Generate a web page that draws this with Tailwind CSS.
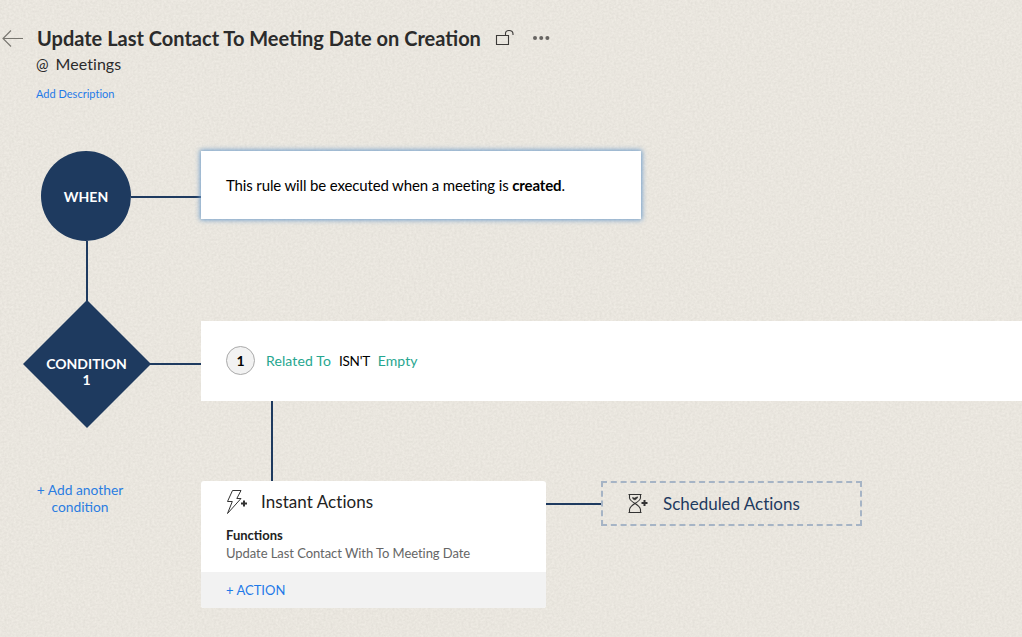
<!DOCTYPE html>
<html lang="en">
<head>
<meta charset="utf-8">
<title>Update Last Contact To Meeting Date on Creation</title>
<script src="https://cdn.jsdelivr.net/npm/@tailwindcss/browser@4"></script>
</head>
<body class="relative isolate h-[637px] w-[1022px] overflow-hidden bg-[#e9e5dd] font-['Lato',sans-serif] text-black">
  <!-- woven paper texture -->
  <svg class="absolute inset-0 -z-10 h-full w-full" aria-hidden="true">
    <filter id="paper" x="0" y="0" width="100%" height="100%" color-interpolation-filters="sRGB">
      <feTurbulence type="fractalNoise" baseFrequency="0.42 0.46" numOctaves="2" seed="4"/>
      <feColorMatrix values="0.07 0 0 0 0.880  0.07 0 0 0 0.866  0.07 0 0 0 0.837  0 0 0 0 1"/>
    </filter>
    <rect width="100%" height="100%" filter="url(#paper)"/>
  </svg>

  <header class="flex h-[151px] items-start">
    <svg class="mt-[29px] ml-[2px] h-[19px] w-[22px] shrink-0" viewBox="0 0 22 19" fill="none" stroke="#77756f" stroke-width="1.1"><path d="M9 1.500L1 9.500l8 8M1 9.500h20"/></svg>
    <div class="ml-[12px] flex flex-col items-start whitespace-nowrap">
      <div class="mt-[23px] flex h-[30px] items-center">
        <h1 class="ml-px w-[444px] text-[20px] leading-[30px] font-bold text-[#2b2b2b]">Update Last Contact To Meeting Date on Creation</h1>
        <svg class="ml-[14px] h-[18px] w-[20px]" viewBox="0 0 20 18" fill="none" stroke="#3c3a38" stroke-width="1.1"><path d="M1.500 6.500h12v9h-12zM10.500 6.500V4.500Q10.500 1.500 14 1.500Q18 1.500 18 5v1"/></svg>
        <svg class="ml-[18px] h-[4px] w-[17px]" viewBox="0 0 17 4" fill="#666461"><circle cx="2" cy="2" r="2"/><circle cx="8.200" cy="2" r="2"/><circle cx="14.400" cy="2" r="2"/></svg>
      </div>
      <p class="text-[16px] leading-[22px] tracking-[0.05px] text-[#2b2b2b]"><span class="mr-[7px] text-[15px]">@</span>Meetings</p>
      <a class="mt-[11px] text-[11px] leading-[16px] tracking-[0.01px] text-[#1f7ae8]">Add Description</a>
    </div>
  </header>

  <main class="flex">
    <section class="flex w-[201px] shrink-0 flex-col">
      <div class="flex items-center pl-[41px]">
        <div class="flex h-[90px] w-[90px] items-center justify-center rounded-full bg-[#1e3a5f] pt-px text-[14px] font-bold text-white">WHEN</div>
        <div class="mt-[2px] h-[2px] flex-1 bg-[#1e3a5f]"></div>
      </div>
      <div class="ml-[86px] h-[60px] w-[2px] bg-[#1e3a5f]"></div>
      <div class="-mt-px flex items-start pl-[23px]">
        <div class="flex h-[128px] w-[128px] items-center justify-center bg-[#1e3a5f] pt-[16px] pr-px text-center text-[14px] leading-[16px] font-bold text-white [clip-path:polygon(50%_0,100%_50%,50%_100%,0_50%)]">CONDITION<br>1</div>
        <div class="mt-[63px] -ml-px h-[2px] flex-1 bg-[#1e3a5f]"></div>
      </div>
      <a class="mt-[53px] ml-[36px] w-[88px] text-center text-[13.800px] leading-[17px] whitespace-nowrap text-[#2a7de1]">+ Add another<br>condition</a>
    </section>

    <section class="flex flex-1 flex-col">
      <div class="flex h-[68px] w-[440px] items-center bg-white pl-[25px] text-[15px] tracking-[-0.14px] whitespace-nowrap shadow-[0_0_5px_1px_#6c9bc9]">
        <p>This rule will be executed when a meeting is <b>created</b>.</p>
      </div>
      <div class="mt-[102px] flex h-[80px] items-center bg-white pl-[25px] text-[14px] whitespace-nowrap">
        <span class="-mt-px flex h-[29px] w-[29px] items-center justify-center rounded-full border border-[#aaa] bg-[#f2f2f2] pb-px font-bold">1</span>
        <span class="-mt-[2px] ml-[11px] tracking-[0.12px] text-[#26a68f]">Related To</span>
        <span class="ml-[8px] text-[13.500px] tracking-[-0.250px]">ISN'T</span>
        <span class="-mt-[2px] ml-[8px] tracking-[0.050px] text-[#26a68f]">Empty</span>
      </div>
      <div class="ml-[70px] h-[80px] w-[2px] bg-[#1e3a5f]"></div>
      <div class="flex items-start">
        <div class="h-[127px] w-[345px] overflow-hidden rounded-[3px] bg-white whitespace-nowrap">
          <div class="flex h-[42px] items-center pl-[25px]">
            <svg class="h-[26px] w-[22px]" viewBox="0 0 22 26" fill="none" stroke="#333" stroke-width="1"><path d="M6.500 1.500H15L10.800 9.500H15L1.500 24.500L6.300 12.500H1.500Z"/><path d="M15 14.500h6M18 11.500v6" stroke-width="2"/></svg>
            <h2 class="ml-[13px] text-[17px] tracking-[0.060px] text-[#222]">Instant Actions</h2>
          </div>
          <div class="h-[49px] pt-[3px] pl-[25px] text-[13px] leading-[18px]">
            <p class="font-bold text-[#222]">Functions</p>
            <p class="tracking-[-0.060px] text-[#666]">Update Last Contact With To Meeting Date</p>
          </div>
          <div class="flex h-[36px] items-center bg-[#f2f2f2] pt-px pl-[25px] text-[13px] text-[#1f7ae8]">+ ACTION</div>
        </div>
        <div class="mt-[22px] h-[2px] w-[55px] bg-[#1e3a5f]"></div>
        <div class="flex h-[45px] w-[261px] items-center border-2 border-dashed border-[#a6b4c5] pl-[25px] whitespace-nowrap">
          <svg class="h-[21px] w-[21px]" viewBox="0 0 21 21" fill="none" stroke="#333" stroke-width="1.1"><path d="M.5 1.500h13M.5 19.500h13M1.500 1.500V5Q2 7.500 7 10.500Q12 13.500 12.500 16.500v3M12.500 1.500V5Q12 7.500 7 10.500Q2 13.500 1.500 16.500v3"/><path d="M4.500 4.500l2 .6 3-1.300v1.200L7 7L5 6Z" fill="#333" stroke-width=".6"/><path d="M13.500 10h6M16.500 7v6" stroke-width="2"/></svg>
          <h2 class="ml-[14px] text-[17px] tracking-[-0.020px] text-[#1e3a5f]">Scheduled Actions</h2>
        </div>
      </div>
    </section>
  </main>
</body>
</html>
